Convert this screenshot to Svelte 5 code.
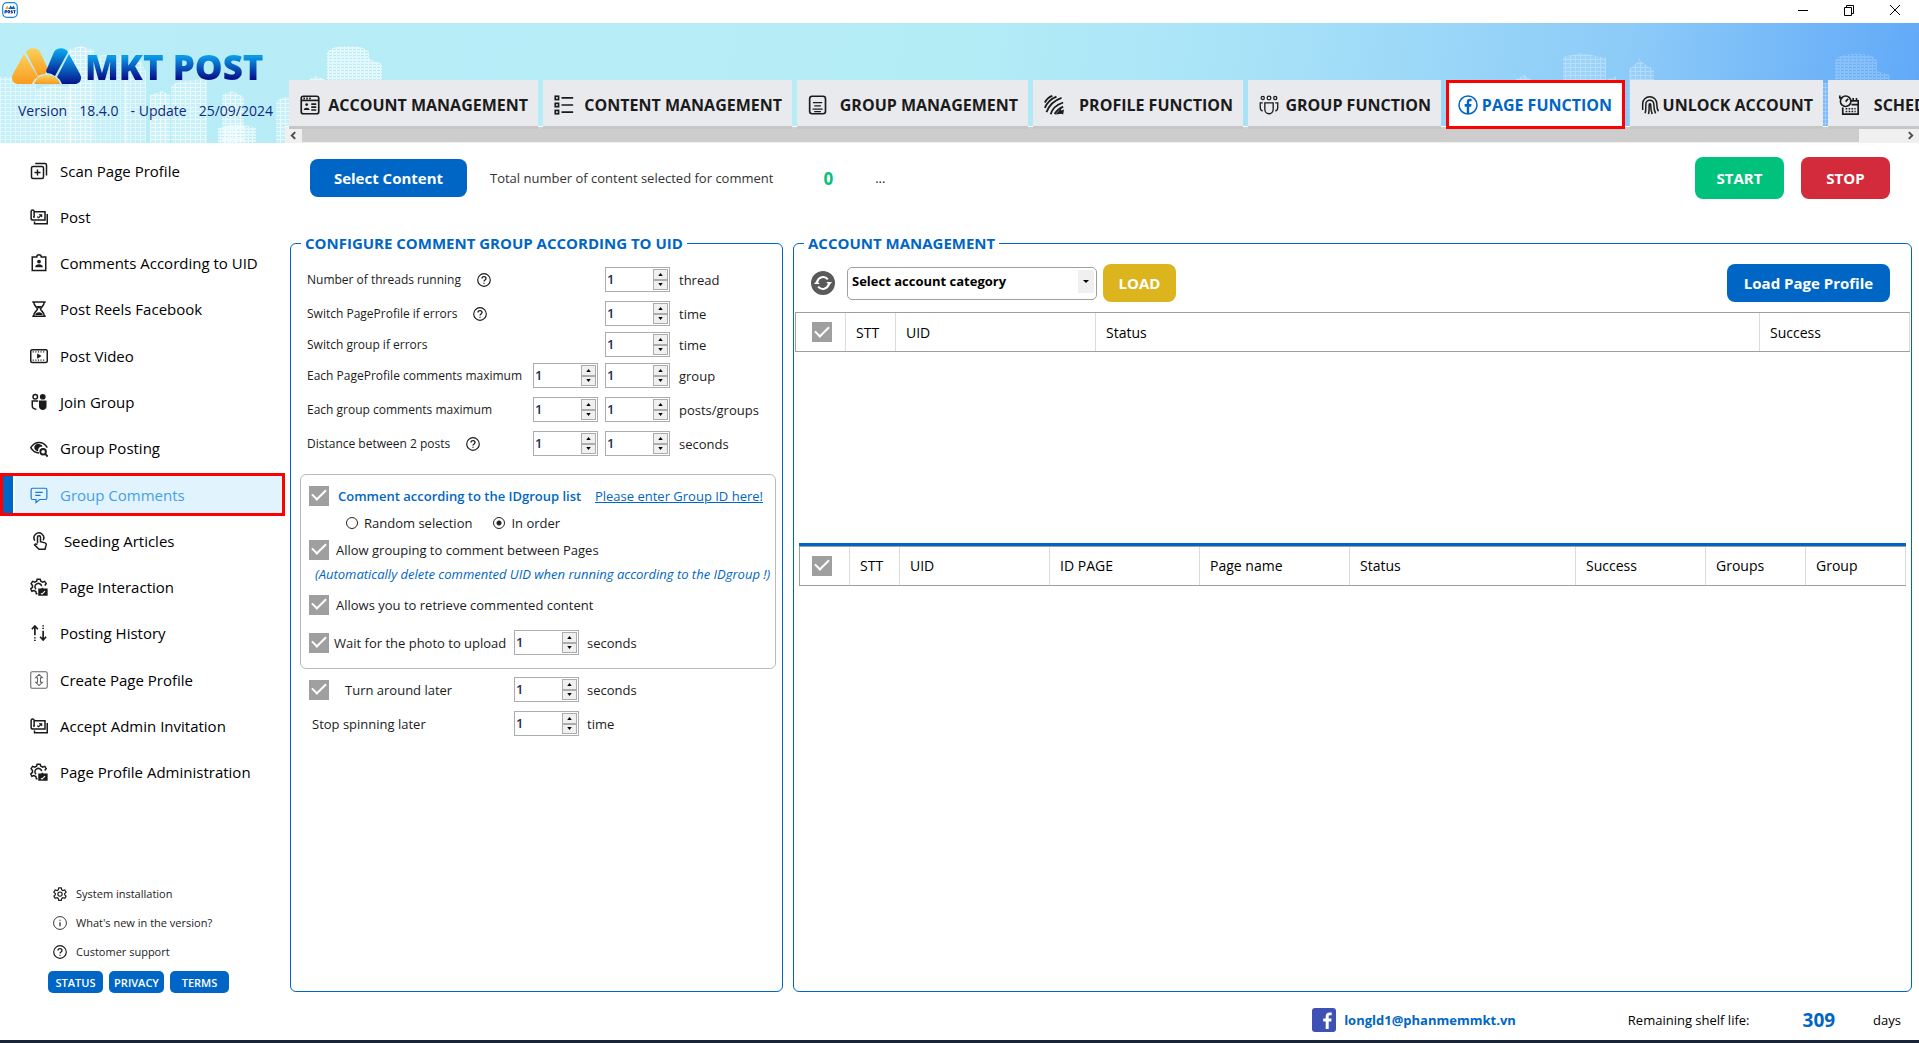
<div class="window">
	<div class="titlebar">
		<svg class="app-icon" viewBox="0 0 16 16" aria-hidden="true">
			<rect x="0.7" y="0.7" width="14.6" height="14.6" rx="4" fill="#fff" stroke="#1689dc" stroke-width="1.2" />
			<path d="M3 7l2.2-3.6L7.4 7z" fill="#f9a828" />
			<path d="M6.6 7l2-3.6 1.6 2 1.2-2L13.4 7z" fill="#0b5fb8" />
			<path d="M3 11.5V8.6h1.8v1.5H3M6 8.6h1.6v2.2H6zM10.6 8.8H9v1h1.4v1.2H8.8M11.4 8.7h2.2M12.5 8.7v2.8" fill="none" stroke="#0b2f92" />
		</svg>
		<div class="window-buttons">
			<button aria-label="Minimize">
				<svg viewBox="0 0 12 12"><path d="M1 6.5h10" /></svg>
			</button>
			<button aria-label="Restore">
				<svg viewBox="0 0 12 12"><path d="M1.5 3.5h7v8h-7zM3.5 3.5v-2h7v8h-2" /></svg>
			</button>
			<button aria-label="Close">
				<svg viewBox="0 0 12 12"><path d="M1 1l10 10M11 1L1 11" /></svg>
			</button>
		</div>
	</div>

	<header>
		<svg class="skyline" viewBox="0 0 1919 120" preserveAspectRatio="xMinYMax slice" aria-hidden="true">
			<defs>
				<pattern id="windows" width="5" height="4" patternUnits="userSpaceOnUse">
					<path d="M0 0h5v1H0zM0 0h1v4H0z" fill="#fff" />
					<path d="M1 1h4v3H1z" fill="#fff" opacity="0.3" />
				</pattern>
				<pattern id="floors" width="4" height="3" patternUnits="userSpaceOnUse">
					<path d="M0 0h4v2H0z" fill="#fff" opacity="0.75" />
					<path d="M0 2h1v1H0z" fill="#fff" />
				</pattern>
			</defs>
			{#each towers as tower}
				<path d={tower.d} fill="url(#{tower.fill})" opacity={tower.opacity} />
			{/each}
		</svg>

		<div class="brand">
			<div class="logo">
				<svg viewBox="0 0 70 37" aria-hidden="true">
					<defs>
						<linearGradient id="gold" x1="0" y1="0" x2="0" y2="1">
							<stop offset="0" stop-color="#f9d15c" />
							<stop offset="1" stop-color="#fb9a1e" />
						</linearGradient>
						<linearGradient id="navy" x1="0" y1="0" x2="0" y2="1">
							<stop offset="0" stop-color="#0bb0f2" />
							<stop offset="1" stop-color="#06128a" />
						</linearGradient>
					</defs>
					<path d="M12 6L1 26c-3 6 1 10 5 10h14q2-5 6-7z" fill="url(#gold)" />
					<path d="M14 4c3-5 11-5 14 0l8 17-3 5q-4 0-7 2z" fill="url(#gold)" />
					<path d="M42 4c3-5 11-5 14 0L43 28q-4-3-8-3l-1-2z" fill="url(#navy)" />
					<path d="M57 6l11 20c3 6-1 10-5 10H50q-1-4-5-7z" fill="url(#navy)" />
					<path d="M22 36q3-9 13-9t13 9z" fill="url(#gold)" />
				</svg>
				<span>MKT POST</span>
			</div>
			<div class="version">
				<span>Version</span>
				<span>18.4.0</span>
				<span>- Update</span>
				<span>25/09/2024</span>
			</div>
		</div>

		<div class="tabs-area">
			<nav class="tabs" aria-label="Modules">
				{#each tabs as tab}
					<button
						class="tab"
						class:active={tab.label === active_tab}
						style="width: {tab.width}px"
						on:click={() => {
							active_tab = tab.label;
						}}
					>
						{@render icon(tab.icon)}
						<span>{tab.label}</span>
					</button>
				{/each}
			</nav>
			<div class="scrollbar">
				<button aria-label="Scroll left"><svg viewBox="0 0 8 8"><path d="M5.5 1l-3 3 3 3" /></svg></button>
				<div class="track"><div class="thumb"></div></div>
				<button aria-label="Scroll right"><svg viewBox="0 0 8 8"><path d="M2.5 1l3 3-3 3" /></svg></button>
			</div>
		</div>
	</header>

	<div class="body">
		<aside>
			<nav class="menu" aria-label="Page function">
				{#each menu as item}
					<button
						class="menu-item"
						class:active={item.label === active_menu}
						on:click={() => {
							active_menu = item.label;
						}}
					>
						{@render icon(item.icon)}
						<span>{item.label}</span>
					</button>
				{/each}
			</nav>
			<div class="links">
				{#each links as link}
					<a href="#{link.icon}">
						{@render icon(link.icon)}
						<span>{link.label}</span>
					</a>
				{/each}
			</div>
			<div class="chips">
				<button>STATUS</button>
				<button>PRIVACY</button>
				<button class="wide">TERMS</button>
			</div>
		</aside>

		<main>
			<div class="toolbar">
				<button class="btn blue select-content">Select Content</button>
				<span class="total">Total number of content selected for comment</span>
				<b class="count">0</b>
				<span class="dots">...</span>
				<div class="run">
					<button class="btn green">START</button>
					<button class="btn red">STOP</button>
				</div>
			</div>

			<div class="panels">
				<fieldset class="config">
					<legend>CONFIGURE COMMENT GROUP ACCORDING TO UID</legend>

					{#each limits as row}
						<div class="limit" class:tight={row.tight}>
							<label for="{row.id}-max">{row.label}</label>
							{#if row.help}
								<button class="help" aria-label="Help: {row.label}">{@render icon('help')}</button>
							{/if}
							<div class="spins">
								{#if row.range}
									{@render spin(`${row.id}-min`, row.label)}
								{/if}
								{@render spin(`${row.id}-max`, row.label)}
							</div>
							<span class="unit">{row.unit}</span>
						</div>
					{/each}

					<div class="box">
						<div class="line">
							<input type="checkbox" id="by-list" checked />
							<label for="by-list" class="strong">Comment according to the IDgroup list</label>
							<a class="enter" href="#group-id">Please enter Group ID here!</a>
						</div>
						<div class="line radios">
							<label><input type="radio" name="order" value="random" bind:group={order} />Random selection</label>
							<label><input type="radio" name="order" value="order" bind:group={order} />In order</label>
						</div>
						<div class="line">
							<input type="checkbox" id="between" checked />
							<label for="between">Allow grouping to comment between Pages</label>
						</div>
						<p>(Automatically delete commented UID when running according to the IDgroup !)</p>
						<div class="line">
							<input type="checkbox" id="retrieve" checked />
							<label for="retrieve">Allows you to retrieve commented content</label>
						</div>
						<div class="line wait">
							<input type="checkbox" id="wait" checked />
							<label for="wait">Wait for the photo to upload</label>
							<div class="late">
								{@render spin('wait-seconds', 'Seconds to wait')}
								<span>seconds</span>
							</div>
						</div>
					</div>

					<div class="line after">
						<input type="checkbox" id="turn" checked />
						<label for="turn" class="indent">Turn around later</label>
						<div class="late">
							{@render spin('turn-seconds', 'Turn around later')}
							<span>seconds</span>
						</div>
					</div>
					<div class="line after">
						<label for="stop-times" class="bare">Stop spinning later</label>
						<div class="late">
							{@render spin('stop-times', 'Stop spinning later')}
							<span>time</span>
						</div>
					</div>
				</fieldset>

				<fieldset class="accounts">
					<legend>ACCOUNT MANAGEMENT</legend>
					<div class="account-bar">
						<button class="refresh" aria-label="Refresh">
							<svg viewBox="0 0 24 24">
								<circle cx="12" cy="12" r="12" fill="#5a5a5a" />
								<path d="M6.2 11a6 6 0 0 1 10.6-2.6M17.8 13a6 6 0 0 1-10.6 2.6" fill="none" stroke="#fff" stroke-width="2" />
								<path d="M15.4 11h5.6l-2.8 3.6zM8.6 13H3l2.8-3.6z" fill="#fff" />
							</svg>
						</button>
						<div class="select">
							<select aria-label="Account category">
								<option>Select account category</option>
							</select>
							<span class="arrow"></span>
						</div>
						<button class="btn gold">LOAD</button>
						<button class="btn blue load-page">Load Page Profile</button>
					</div>
					<div class="panes">
						<div class="pane">
							<table>
								<thead>
									<tr>
										<th class="w50 pick"><input type="checkbox" aria-label="Select all accounts" checked /></th>
										<th class="w50">STT</th>
										<th class="w200">UID</th>
										<th>Status</th>
										<th class="w150">Success</th>
									</tr>
								</thead>
							</table>
						</div>
						<div class="pane lower">
							<table>
								<thead>
									<tr>
										<th class="w50 pick"><input type="checkbox" aria-label="Select all pages" checked /></th>
										<th class="w50">STT</th>
										<th class="w150">UID</th>
										<th class="w150">ID PAGE</th>
										<th class="w150">Page name</th>
										<th>Status</th>
										<th class="w130">Success</th>
										<th class="w100">Groups</th>
										<th class="w100">Group</th>
									</tr>
								</thead>
							</table>
						</div>
					</div>
				</fieldset>
			</div>

			<footer>
				<svg viewBox="0 0 24 24" aria-hidden="true">
					<rect width="24" height="24" rx="3" fill="#3f51b5" />
					<path d="M16.7 21v-7.6h2.5l.4-3h-2.9V8.700c0-.9.3-1.400 1.500-1.400h1.500V4.600c-.3 0-1.200-.1-2.200-.1-2.300 0-3.800 1.300-3.800 3.800v2.100h-2.500v3h2.500V21z" fill="#fff" />
				</svg>
				<a href="mailto:longld1@phanmemmkt.vn">longld1@phanmemmkt.vn</a>
				<span class="shelf">Remaining shelf life:</span>
				<b>309</b>
				<span class="days">days</span>
			</footer>
		</main>
	</div>
	<div class="taskbar"></div>
</div>

{#snippet spin(id, label)}
	<span class="spin">
		<input type="number" {id} aria-label={label} bind:value={values[id]} />
		<span class="steps">
			<button
				tabindex="-1"
				aria-label="Increase"
				on:click={() => {
					values[id] += 1;
				}}><svg viewBox="0 0 6 4"><path d="M0 4h6L3 0z" /></svg></button
			>
			<button
				tabindex="-1"
				aria-label="Decrease"
				on:click={() => {
					values[id] -= 1;
				}}><svg viewBox="0 0 6 4"><path d="M0 0h6L3 4z" /></svg></button
			>
		</span>
	</span>
{/snippet}

{#snippet icon(name)}
	<svg class="icon" viewBox="0 0 24 24" aria-hidden="true">
		{#if name === 'account'}
			<rect x="1.5" y="1.5" width="21" height="21" rx="2.5" />
			<path d="M1.5 6.500h21" />
			<path d="M4 4h2M7.5 4h2M11 4h2" />
			<circle class="solid" cx="8" cy="11.5" r="1.7" />
			<path class="solid" d="M4.5 18c0-3.5 7-3.5 7 0z" />
			<path d="M13.5 11h6M13.5 14.5h6M13.5 18h6" />
		{:else if name === 'content'}
			<rect x="1.5" y="1.5" width="4" height="4" />
			<rect x="1.5" y="10" width="4" height="4" />
			<rect x="1.5" y="18.5" width="4" height="4" />
			<path d="M9 3.5h14M9 12h14M9 20.5h14" />
		{:else if name === 'sheet'}
			<rect x="2" y="1.5" width="19" height="21" rx="3" />
			<path d="M6 9h11M7.5 13h8M5.5 17h12M7.5 20h8" stroke-width="1.5" />
		{:else if name === 'profile'}
			<path d="M1 9q3-6 9-8M1 15.5Q5 6 15 2M3 20.5Q8 8 21 3.5M8 23Q11 13 23 9M13 23q2-5 10-9" stroke-width="2.2" />
			<path class="solid" d="M14 23.5l6-7 1 2 3-1-1 6-2-1z" />
		{:else if name === 'groups'}
			<circle cx="4.5" cy="3.5" r="1.9" stroke-width="1.5" />
			<circle cx="12" cy="3.5" r="2.2" stroke-width="1.5" />
			<circle cx="19.5" cy="3.5" r="1.9" stroke-width="1.5" />
			<path d="M7 9.5h10v8a5 5 0 0 1-10 0zM4.5 9.5H1.5V15c0 2.500 1 3.800 3 4M19.5 9.500h3V15c0 2.500-1 3.800-3 4" stroke-width="1.6" />
		{:else if name === 'facebook'}
			<circle cx="12" cy="12" r="10.8" stroke-width="1.8" />
			<path class="solid" d="M10.5 22.5V14H8v-3.200h2.500V8.600c0-2.700 1.500-4 3.800-4 .9 0 1.700.1 2 .1v2.800h-1.400c-1.200 0-1.500.6-1.500 1.500v1.800h2.800l-.4 3.200h-2.400v8.500z" />
		{:else if name === 'finger'}
			<path d="M2 18V10.500a8.500 8.500 0 0 1 17 0V12c0 4.500.5 5.500 2 7.500M5 22c1-3 .8-6 .8-11a4.800 4.800 0 0 1 9.600 0c0 5 .6 8 2.100 11M9 23c1-4 .8-7 .8-11.500a.9.9 0 0 1 1.800 0c0 5 .4 8 1.900 11.500" stroke-width="1.8" />
		{:else if name === 'schedule'}
			<path d="M14 7h9v16H4.500v-8M17 3.500V8M21 3.500V8M15 11.500h8" />
			<circle cx="8" cy="7.5" r="6.3" /><path d="M8 8l3-3.500M1 .5v3h3" />
			<path d="M8 16.500h12M8 19.800h12" stroke-dasharray="2 1.500" />
		{:else if name === 'scan'}
			<rect x="2" y="6" width="16" height="16" rx="2" />
			<path d="M7 2h13q2 0 2 2v14M10 10v8M6 14h8" />
		{:else if name === 'post'}
			<path d="M5 5h15v11H4a2.500 2.500 0 0 1-2.500-2.500v-9a2 2 0 0 1 4 0V12H4M23 8v13H6v-3" />
			<path d="M9.500 11.500l2 1.500 4-4M15.500 12V9H12" stroke-width="1.5" />
		{:else if name === 'clipboard'}
			<path d="M3 4h6a3 3 0 0 1 6 0h6v18H3z" />
			<circle class="solid" cx="12" cy="10" r="2.5" />
			<path class="solid" d="M7 17.500c0-5 10-5 10 0z" />
		{:else if name === 'hourglass'}
			<path d="M3 2.500h18M3 21.500h18M5 3c0 5 5 7 5 9s-5 4-5 9M19 3c0 5-5 7-5 9s5 4 5 9" />
			<path class="solid" d="M8 8h8l-4 3.500zM7 20c0-5 10-5 10 0z" />
		{:else if name === 'video'}
			<rect x="1" y="3.5" width="22" height="17" rx="2" />
			<path d="M3.500 6.500h17M3.500 17.500h17" stroke-dasharray="1.5 2" stroke-width="1.5" />
			<path class="solid" d="M9.500 8.500l6 3.500-6 3.500z" />
		{:else if name === 'join'}
			<circle cx="7" cy="5" r="3" />
			<circle class="solid" cx="17" cy="5" r="3.8" />
			<path d="M11 10.500H3V17c0 3 2 4.500 5.500 4.500" />
			<path class="solid" d="M12 10h10v8c0 6-10 6-10 0z" />
		{:else if name === 'eye'}
			<path d="M12 18.500C7 18.500 3 15 1 11.500 3 8 7 4.500 12 4.500s9 3 11 7" />
			<path class="solid" d="M12 6.500a5 5 0 1 0-1 9.800q-1-4 3-6 2 0 2.500-.8 0-2-4.500-3z" />
			<circle cx="17.5" cy="17" r="3.7" stroke-width="2.5" /><path d="M20.500 20l3 3.500" stroke-width="2.5" />
		{:else if name === 'comment'}
			<path d="M3.500 3h17q2 0 2 2v11q0 2-2 2H13l-5 4v-4H3.500q-2 0-2-2V5q0-2 2-2zM7 8.500h10M7 12.500h7" stroke-width="1.6" />
		{:else if name === 'tap'}
			<path d="M10 15V7a2 2 0 0 1 4 0v6l6 1.500q2 .5 1.500 3L20 23h-8l-6-6q1-2 4-.5M6.500 11.500a6.500 6.500 0 1 1 11-.5" />
		{:else if name === 'gearbox'}
			<path d="M10 21H8.500l-.7-3-2.500-1.300-2.800 1L1 14.500l2.300-2V10L1.500 7.500l2-3 3 1L9 4l.5-2.500h4L14.300 4l2.500 1.500 2.800-1 2 3-2 2.500M8 15a4.500 4.500 0 1 1 7.500-4" />
			<path class="solid" d="M11 14h4l1.500-1.500L18 14h5.500v9.500H11z" />
			<path d="M14.500 20.500l1.500 1 4-4" stroke="#fff" stroke-width="1.5" />
		{:else if name === 'updown'}
			<path d="M6.500 15V3M2.500 7l4-4.500 4 4.500M17.500 9v12M13.500 17l4 4.500 4-4.500" stroke-width="2.2" />
			<path d="M6.500 17.500v5M17.500 1.500v5" stroke-width="2.2" stroke-dasharray="1.8 1.6" />
		{:else if name === 'create'}
			<g stroke="#666" stroke-width="1.4">
				<rect x="1" y="1" width="22" height="22" rx="2" />
				<path d="M12 4.500l4.500 4.500h-2.500v6h2.500L12 19.500 7.500 15H10V9H7.500z" />
			</g>
		{:else if name === 'gear'}
			<path d="M9.800 1.500h4.400l.8 3.300 2 1.200 3.300-1 2.200 3.800-2.500 2.300v2.300l2.500 2.200-2.200 3.800-3.300-1-2 1.200-.8 3.300H9.800L9 19.600l-2-1.200-3.300 1-2.200-3.800L4 13.400v-2.300L1.500 8.800 3.700 5 7 6l2-1.200z" />
			<circle cx="12" cy="12.2" r="3.7" />
		{:else if name === 'info'}
			<circle cx="12" cy="12" r="11" stroke-width="1.5" />
			<path d="M12 10.500v7M12 6.500v1.800" />
		{:else if name === 'help'}
			<circle cx="12" cy="12" r="10.8" />
			<path d="M8.500 9.500c0-4.500 7-4.500 7 0 0 2.300-3.500 2.500-3.500 5M12 16.500v2" stroke-width="2.2" />
		{/if}
	</svg>
{/snippet}

<script>
	let active_tab = 'PAGE FUNCTION';
	let active_menu = 'Group Comments';
	let order = 'order';

	const tabs = [
		{ label: 'ACCOUNT MANAGEMENT', icon: 'account', width: 249 },
		{ label: 'CONTENT MANAGEMENT', icon: 'content', width: 249 },
		{ label: 'GROUP MANAGEMENT', icon: 'sheet', width: 231 },
		{ label: 'PROFILE FUNCTION', icon: 'profile', width: 210 },
		{ label: 'GROUP FUNCTION', icon: 'groups', width: 193 },
		{ label: 'PAGE FUNCTION', icon: 'facebook', width: 179 },
		{ label: 'UNLOCK ACCOUNT', icon: 'finger', width: 193 },
		{ label: 'SCHEDULE', icon: 'schedule', width: 138 }
	];

	const menu = [
		{ label: 'Scan Page Profile', icon: 'scan' },
		{ label: 'Post', icon: 'post' },
		{ label: 'Comments According to UID', icon: 'clipboard' },
		{ label: 'Post Reels Facebook', icon: 'hourglass' },
		{ label: 'Post Video', icon: 'video' },
		{ label: 'Join Group', icon: 'join' },
		{ label: 'Group Posting', icon: 'eye' },
		{ label: 'Group Comments', icon: 'comment' },
		{ label: ' Seeding Articles', icon: 'tap' },
		{ label: 'Page Interaction', icon: 'gearbox' },
		{ label: 'Posting History', icon: 'updown' },
		{ label: 'Create Page Profile', icon: 'create' },
		{ label: 'Accept Admin Invitation', icon: 'post' },
		{ label: 'Page Profile Administration', icon: 'gearbox' }
	];

	const links = [
		{ label: 'System installation', icon: 'gear' },
		{ label: "What's new in the version?", icon: 'info' },
		{ label: 'Customer support', icon: 'help' }
	];

	const limits = [
		{ id: 'threads', label: 'Number of threads running', unit: 'thread', help: true },
		{ id: 'switch-page', label: 'Switch PageProfile if errors', unit: 'time', help: true },
		{ id: 'switch-group', label: 'Switch group if errors', unit: 'time', tight: true },
		{ id: 'per-page', label: 'Each PageProfile comments maximum', unit: 'group', range: true, tight: true },
		{ id: 'per-group', label: 'Each group comments maximum', unit: 'posts/groups', range: true },
		{ id: 'distance', label: 'Distance between 2 posts', unit: 'seconds', range: true, help: true }
	];

	let values = { 'wait-seconds': 1, 'turn-seconds': 1, 'stop-times': 1 };
	for (const row of limits) {
		values[`${row.id}-max`] = 1;
		if (row.range) values[`${row.id}-min`] = 1;
	}

	const towers = [
		{ d: 'M0 54h14l4-6 18 8v64H0z', fill: 'windows', opacity: 0.6 },
		{ d: 'M36 66l18-5 18 5v54H36z', fill: 'windows', opacity: 0.75 },
		{ d: 'M68 27l12-4 14 4v93H68z', fill: 'windows', opacity: 0.8 },
		{ d: 'M94 34l18-4 16 6v84H94z', fill: 'windows', opacity: 0.5 },
		{ d: 'M124 48l12-18 10 18v72h-22z', fill: 'windows', opacity: 0.6 },
		{ d: 'M150 72l12-4 8 4v48h-20z', fill: 'windows', opacity: 0.8 },
		{ d: 'M171 62l10-4 26-2v64h-36z', fill: 'windows', opacity: 0.7 },
		{ d: 'M222 72l10-4 12 6v46h-22z', fill: 'windows', opacity: 0.75 },
		{ d: 'M218 105q20-6 38 0v15h-38z', fill: 'floors', opacity: 0.8 },
		{ d: 'M276 78l8-4h26v-18l6-3 8 3v64h-48z', fill: 'windows', opacity: 0.7 },
		{ d: 'M327 30q3-7 21-7t21 7v6l13 5v79h-55z', fill: 'floors', opacity: 0.8 },
		{ d: 'M1516 56l8-4 9 6v62h-17z', fill: 'windows', opacity: 0.35 },
		{ d: 'M1563 34l18-4 25 5v22l10-4v67h-53z', fill: 'windows', opacity: 0.35 },
		{ d: 'M1629 46l10-8v-6l1 6 14 9v73h-25z', fill: 'windows', opacity: 0.35 },
		{ d: 'M1800 60h32v60h-32z', fill: 'windows', opacity: 0.35 },
		{ d: 'M1835 38q3-7 21-7t21 7v10l13 4v68h-55z', fill: 'floors', opacity: 0.25 }
	];
</script>

<style>
	:global(body) {
		font-family: 'Open Sans', 'Noto Sans', sans-serif;
		font-size: 13px;
		color: #1b1b1b;
		background: #fff;
	}
	.window {
		--blue: #0066c5;
		min-height: 100vh;
		display: flex;
		flex-direction: column;
		overflow: hidden;
	}
	.window :global(*) {
		box-sizing: border-box;
	}
	button {
		font: inherit;
		color: inherit;
		border: 0;
		padding: 0;
		background: none;
	}
	a {
		color: inherit;
		text-decoration: none;
	}
	.icon {
		display: block;
		flex: none;
		fill: none;
		stroke: currentColor;
		stroke-width: 2;
	}
	.solid {
		fill: currentColor;
		stroke: none;
	}

	.titlebar {
		height: 23px;
		display: flex;
		justify-content: space-between;
		align-items: center;
		padding: 0 14px 3px 2px;
	}
	.app-icon {
		width: 16px;
		height: 16px;
	}
	.window-buttons {
		display: flex;
		gap: 34px;
		padding-right: 4px;
	}
	.window-buttons svg {
		display: block;
		width: 12px;
		height: 12px;
		fill: none;
		stroke: #000;
	}

	header {
		position: relative;
		height: 120px;
		display: flex;
		background: linear-gradient(100deg, #b9edf8 0%, #b4ecf6 50%, #a8e2f8 65%, #8dcbf8 84%, #60a8f8 100%);
	}
	.skyline {
		position: absolute;
		inset: 0;
		width: 100%;
		height: 100%;
	}
	.brand {
		position: relative;
		flex: none;
		width: 285px;
		padding: 25px 0 0 12px;
	}
	.logo {
		display: flex;
		align-items: center;
		height: 37px;
		gap: 3px;
	}
	.logo svg {
		flex: none;
		width: 70px;
		height: 37px;
	}
	.logo span {
		font-size: 35px;
		line-height: 44px;
		font-weight: 800;
		white-space: nowrap;
		background: linear-gradient(#0a9be8 26%, #07128c 76%);
		background-clip: text;
		color: transparent;
	}
	.version {
		display: flex;
		gap: 12px;
		margin-top: 15px;
		padding-left: 6px;
		font-size: 14px;
		line-height: 22px;
		color: #102a7c;
		white-space: nowrap;
	}
	.tabs-area {
		position: relative;
		flex: 1;
		min-width: 0;
		display: flex;
		flex-direction: column;
		justify-content: flex-end;
	}
	.tabs {
		position: relative;
		z-index: 1;
		display: flex;
		gap: 5px;
		margin-bottom: -3px;
		padding-left: 4px;
		overflow: hidden;
	}
	.tab {
		flex: none;
		height: 49px;
		padding: 0 10px 0 11px;
		display: flex;
		justify-content: space-between;
		align-items: center;
		background: #e9eaee;
		box-shadow: inset 0 -3px #c5c7c6;
		font-size: 16px;
		line-height: 20px;
		font-weight: 700;
		white-space: nowrap;
	}
	.tab.active {
		border: 3px solid #f00;
		padding: 0 10px 0 9px;
		background: #fff;
		box-shadow: none;
		color: var(--blue);
	}
	.tab .icon {
		width: 20px;
		height: 20px;
	}
	.scrollbar {
		display: flex;
		height: 17px;
		border-top: 1px solid #fff;
		background: #f0f0f0;
	}
	.scrollbar button {
		width: 17px;
		display: grid;
		place-items: center;
	}
	.scrollbar svg {
		width: 9px;
		height: 9px;
		fill: none;
		stroke: #505050;
		stroke-width: 1.8;
	}
	.track {
		flex: 1;
	}
	.thumb {
		width: calc(100% - 43px);
		height: 15px;
		background: #cdcdcd;
	}

	.body {
		flex: 1;
		display: flex;
	}
	aside {
		flex: none;
		width: 285px;
		display: flex;
		flex-direction: column;
		padding: 6px 0 47px;
	}
	.menu {
		flex: 1;
		display: flex;
		flex-direction: column;
		justify-content: space-between;
	}
	.menu-item {
		height: 43px;
		display: flex;
		align-items: center;
		gap: 12px;
		padding-left: 30px;
		font-size: 15px;
		color: #000;
		white-space: pre;
	}
	.menu-item .icon {
		width: 18px;
		height: 18px;
		color: #1b1b1b;
	}
	.menu-item.active {
		border: 3px solid #f00;
		padding-left: 27px;
		background: linear-gradient(90deg, var(--blue) 10px, #fff 10px, #fff 12px, #e1f3fc 12px);
		color: #459fea;
	}
	.menu-item.active .icon {
		color: #1b78d2;
	}
	.links {
		margin-top: 85px;
		padding-left: 53px;
		font-size: 11px;
	}
	.links a {
		height: 29px;
		display: flex;
		align-items: center;
		gap: 9px;
	}
	.links .icon {
		width: 14px;
		height: 14px;
	}
	.chips {
		display: flex;
		gap: 6px;
		padding: 5px 0 0 48px;
	}
	.chips button {
		width: 55px;
		height: 22px;
		border-radius: 5px;
		background: var(--blue);
		color: #fff;
		font-size: 11px;
		font-weight: 600;
	}
	.chips .wide {
		width: 59px;
	}

	main {
		flex: 1;
		min-width: 0;
		display: flex;
		flex-direction: column;
		padding: 0 7px 0 5px;
	}
	.toolbar {
		display: flex;
		align-items: center;
		height: 70px;
		padding: 0 22px 0 20px;
	}
	.btn {
		height: 38px;
		border-radius: 8px;
		color: #fff;
		font-size: 15px;
		font-weight: 700;
	}
	.blue {
		background: var(--blue);
	}
	.green {
		background: #00c27c;
	}
	.red {
		background: #d32a3c;
	}
	.gold {
		width: 73px;
		margin-left: 6px;
		background: #dbb41e;
	}
	.select-content {
		width: 157px;
	}
	.total {
		margin-left: 23px;
		color: #333;
	}
	.count {
		margin-left: 50px;
		font-size: 17px;
		color: #00c27c;
	}
	.dots {
		margin-left: 42px;
	}
	.run {
		margin-left: auto;
		display: flex;
		gap: 17px;
	}
	.run .btn {
		width: 89px;
		height: 42px;
	}

	.panels {
		flex: 1;
		display: flex;
		gap: 10px;
		padding-top: 19px;
	}
	fieldset {
		min-width: 0;
		margin: 0;
		padding: 0;
		border: 1px solid var(--blue);
		border-radius: 6px;
	}
	legend {
		margin-left: 10px;
		padding: 0 4px;
		font-size: 15px;
		line-height: 22px;
		font-weight: 700;
		color: var(--blue);
	}
	.config {
		flex: none;
		width: 493px;
		padding: 13px 6px 0 9px;
	}
	.config legend {
		margin-left: 1px;
	}
	.limit {
		height: 25px;
		margin-bottom: 9px;
		display: flex;
		align-items: center;
		padding-left: 7px;
	}
	.limit:has(+ .tight),
	.limit.tight:has(+ .tight) {
		margin-bottom: 6px;
	}
	.limit label {
		font-size: 12px;
	}
	.help {
		margin-left: 16px;
	}
	.help .icon {
		width: 14px;
		height: 14px;
	}
	.spins {
		margin-left: auto;
		display: flex;
		gap: 7px;
	}
	.unit {
		width: 106px;
		padding-left: 9px;
	}
	.spin {
		width: 65px;
		height: 25px;
		flex: none;
		display: flex;
		padding: 1px;
		border: 1px solid #abadb3;
		background: #fff;
	}
	.spin input {
		flex: 1;
		min-width: 0;
		padding: 0 0 2px 0;
		border: 0;
		outline: 0;
		font: inherit;
		font-weight: 600;
		color: #1f2f4f;
		background: none;
		appearance: textfield;
	}
	.spin input::-webkit-inner-spin-button {
		display: none;
	}
	.steps {
		width: 15px;
		display: flex;
		flex-direction: column;
	}
	.steps button {
		flex: 1;
		display: grid;
		place-items: center;
		border: 1px solid #acacac;
		background: #f0f0f0;
	}
	.steps svg {
		width: 5px;
		height: 3px;
	}
	.box {
		margin-top: 18px;
		height: 195px;
		padding: 8px 8px 0 8px;
		border: 1px solid #bbb;
		border-radius: 6px;
	}
	.line {
		min-height: 25px;
		display: flex;
		align-items: center;
		gap: 7px;
		white-space: nowrap;
	}
	input[type='checkbox'] {
		flex: none;
		width: 20px;
		height: 20px;
		margin: 0;
		appearance: none;
		display: grid;
		place-items: center;
		background: #9f9f9f;
	}
	input[type='checkbox']:checked::after {
		content: '';
		width: 12px;
		height: 6px;
		margin-bottom: 5px;
		border: solid #fff;
		border-width: 0 0 2px 2px;
		transform: rotate(-45deg);
	}
	.strong {
		padding-left: 2px;
		font-weight: 600;
		color: var(--blue);
	}
	.enter {
		margin-left: auto;
		padding-right: 4px;
		color: var(--blue);
		text-decoration: underline;
	}
	.radios {
		min-height: 29px;
		gap: 21px;
		padding-left: 37px;
	}
	.radios label {
		display: flex;
		align-items: center;
		gap: 6px;
	}
	input[type='radio'] {
		width: 12px;
		height: 12px;
		margin: 0;
		appearance: none;
		border: 1px solid #222;
		border-radius: 50%;
	}
	input[type='radio']:checked {
		background: radial-gradient(#222 0 2px, #fff 3px);
	}
	p {
		margin: 0 0 6px 6px;
		line-height: 24px;
		font-style: italic;
		white-space: nowrap;
		color: var(--blue);
	}
	.wait {
		margin-top: 13px;
		gap: 5px;
	}
	.late {
		flex: none;
		width: 262px;
		margin-left: auto;
		display: flex;
		align-items: center;
		gap: 8px;
	}
	.box .late {
		width: 253px;
	}
	.after {
		margin: 8px 0 9px 9px;
	}
	.indent {
		padding-left: 9px;
	}
	.bare {
		padding-left: 3px;
	}

	.accounts {
		flex: 1;
		display: flex;
		flex-direction: column;
	}
	.account-bar {
		display: flex;
		align-items: center;
		height: 58px;
		padding: 0 21px 0 17px;
	}
	.refresh svg {
		display: block;
		width: 24px;
		height: 24px;
	}
	.select {
		position: relative;
		width: 250px;
		margin-left: 12px;
	}
	select {
		display: block;
		width: 100%;
		height: 33px;
		padding: 0 20px 4px 4px;
		appearance: none;
		border: 1px solid #9f9f9f;
		border-radius: 5px;
		background: #fff;
		font: inherit;
		font-weight: 700;
		color: #000;
	}
	.arrow {
		position: absolute;
		top: 3px;
		right: 3px;
		width: 16px;
		height: 23px;
		display: grid;
		place-items: center;
		background: #f0f0f0;
		pointer-events: none;
	}
	.arrow::after {
		content: '';
		border: 3px solid transparent;
		border-top-color: #000;
		border-bottom: 0;
	}
	.load-page {
		width: 163px;
		margin-left: auto;
	}
	.panes {
		flex: 1;
		display: grid;
		grid-template-rows: 34fr 66fr;
		padding: 0 1px;
	}
	.lower {
		margin: 0 4px;
		border-top: 3px solid var(--blue);
	}
	table {
		width: 100%;
		table-layout: fixed;
		border-collapse: separate;
		border-spacing: 0;
		border: solid #9f9f9f;
		border-width: 1px 0 1px 1px;
	}
	th {
		height: 38px;
		padding: 0 0 0 10px;
		border-right: 1px solid #dcdcdc;
		text-align: left;
		font-size: 14px;
		font-weight: 400;
		color: #000;
	}
	.pick {
		padding-left: 16px;
	}
	.lower .pick {
		padding-left: 12px;
	}
	.w50 {
		width: 50px;
	}
	.w100 {
		width: 100px;
	}
	.w130 {
		width: 130px;
	}
	.w150 {
		width: 150px;
	}
	.w200 {
		width: 200px;
	}

	footer {
		height: 48px;
		display: flex;
		align-items: center;
		justify-content: flex-end;
		padding: 8px 11px 0 0;
		color: #000;
	}
	footer svg {
		width: 24px;
		height: 24px;
	}
	footer a {
		margin-left: 8px;
		font-weight: 700;
		color: var(--blue);
	}
	footer b {
		margin-left: 53px;
		font-size: 19px;
		color: var(--blue);
	}
	.shelf {
		margin-left: 112px;
	}
	.days {
		margin-left: 38px;
	}
	.taskbar {
		height: 3px;
		background: #1a2438;
	}
</style>
